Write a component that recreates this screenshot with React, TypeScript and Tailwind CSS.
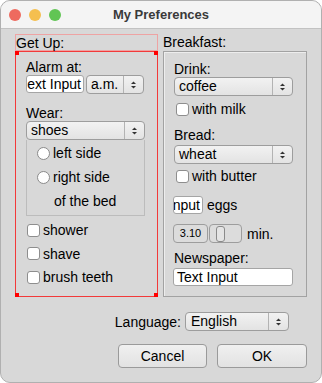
import React from 'react';

// Small up/down arrows used on the right side of popup buttons
function Arrows() {
    return (
        <svg width="7" height="10" viewBox="0 0 7 10" className="block">
            <path d="M1 4 L3.5 1.5 L6 4 Z" fill="#333" />
            <path d="M1 6 L3.5 8.5 L6 6 Z" fill="#333" />
        </svg>
    );
}

function Popup({ value, className = '' }: { value: string; className?: string }) {
    return (
        <div className={`flex h-[19px] items-stretch rounded-[4px] border border-[#9d9d9d] bg-gradient-to-b from-[#f2f2f2] to-[#e3e3e3] ${className}`}>
            <span className="flex-1 pl-[4px] leading-[17px] truncate">{value}</span>
            <span className="flex w-[20px] items-center justify-center border-l border-[#b3b3b3]">
                <Arrows />
            </span>
        </div>
    );
}

// Text field; the scrolled ones only show the tail of "Text Input"
function Field({ value, className = '', tail = false }: { value: string; className?: string; tail?: boolean }) {
    return (
        <div className={`flex h-[18px] overflow-hidden rounded-[3px] border border-[#a5a5a5] bg-white ${tail ? 'justify-end pr-[2px]' : 'pl-[3px]'} ${className}`}>
            <span className="whitespace-nowrap leading-[16px]">{value}</span>
        </div>
    );
}

function Check({ label, className = '' }: { label: string; className?: string }) {
    return (
        <div className={`flex items-center gap-[3px] ${className}`}>
            <span className="h-[13px] w-[13px] rounded-[3px] border border-[#8e8e8e] bg-white" />
            <span className="leading-[16px]">{label}</span>
        </div>
    );
}

function Radio({ label }: { label: string }) {
    return (
        <div className="flex h-[24px] items-center gap-[3px]">
            <span className="h-[13px] w-[13px] rounded-full border border-[#8a8a8a] bg-white" />
            <span className="leading-[16px]">{label}</span>
        </div>
    );
}

export default function App() {
    return (
        <div className="h-[383px] w-[322px] bg-white font-['Liberation_Sans',Arial,sans-serif] text-[14px] text-black">
            <div className="flex h-full flex-col overflow-hidden rounded-[10px] border border-[#b0b0b0] bg-[#d8d8d8]">
                {/* Title bar */}
                <div className="grid h-[28px] grid-cols-[1fr_auto_1fr] items-center border-b border-[#c2c2c2] bg-[#f4f4f4]">
                    <div className="flex gap-[8px] pl-[8px]">
                        <span className="h-[12px] w-[12px] rounded-full bg-[#ee6a5f]" />
                        <span className="h-[12px] w-[12px] rounded-full bg-[#f5bf4f]" />
                        <span className="h-[12px] w-[12px] rounded-full bg-[#61c554]" />
                    </div>
                    <span className="text-[13px] font-bold text-[#3a3a3a]">My Preferences</span>
                    <div />
                </div>

                {/* Columns */}
                <div className="flex gap-[5px] pl-[14px] pt-[5px]">
                    {/* Get Up */}
                    <div className="flex w-[143px] flex-col">
                        <div className="h-[17px] border border-[#eea3a3] leading-[16px]">Get Up:</div>
                        <div className="relative flex h-[246px] flex-col border border-[#f23a3a] pl-[10px] pr-[12px] pt-[7px]">
                            <span className="absolute -left-[1px] -top-[1px] h-[4px] w-[4px] bg-[#f00]" />
                            <span className="absolute -right-[1px] -top-[1px] h-[4px] w-[4px] bg-[#f00]" />
                            <span className="absolute -bottom-[1px] -left-[1px] h-[4px] w-[4px] bg-[#f00]" />
                            <span className="absolute -bottom-[1px] -right-[1px] h-[4px] w-[4px] bg-[#f00]" />

                            <div className="h-[16px] leading-[16px]">Alarm at:</div>
                            <div className="flex gap-[2px]">
                                <Field value="ext Input" tail className="w-[58px]" />
                                <Popup value="a.m." className="h-[18px] w-[58px]" />
                            </div>

                            <div className="mt-[11px] h-[16px] leading-[16px]">Wear:</div>
                            <Popup value="shoes" className="relative" />
                            <div className="flex h-[76px] flex-col border-x border-b border-[#bcbcbc] pl-[10px] pt-px">
                                <Radio label="left side" />
                                <Radio label="right side" />
                                <div className="flex h-[24px] items-center pl-[17px]">of the bed</div>
                            </div>

                            <Check label="shower" className="ml-px mt-[2px] h-[24px]" />
                            <Check label="shave" className="ml-px h-[23px]" />
                            <Check label="brush teeth" className="ml-px h-[24px]" />
                        </div>
                    </div>

                    {/* Breakfast */}
                    <div className="flex w-[144px] flex-col">
                        <div className="h-[17px] leading-[16px]">Breakfast:</div>
                        <div className="flex h-[246px] flex-col border border-[#a2a2a2] pl-[10px] pr-[13px] pt-[9px] shadow-[inset_1px_1px_0_#ededed]">
                            <div className="h-[16px] leading-[16px]">Drink:</div>
                            <Popup value="coffee" />
                            <Check label="with milk" className="ml-[2px] mt-px h-[24px]" />

                            <div className="mt-[6px] h-[16px] leading-[16px]">Bread:</div>
                            <Popup value="wheat" className="mt-[2px]" />
                            <Check label="with butter" className="ml-[2px] h-[24px]" />

                            <div className="mt-[8px] flex items-center gap-[4px]">
                                <Field value="nput" tail className="-ml-px w-[30px]" />
                                <span className="leading-[16px]">eggs</span>
                            </div>

                            <div className="mt-[10px] flex items-center">
                                <div className="-ml-px flex h-[19px] w-[35px] items-center justify-center rounded-[4px] border border-[#9d9d9d] bg-[#dcdcdc] text-[11px]">3.10</div>
                                <div className="ml-px flex h-[19px] w-[33px] items-center rounded-[4px] border border-[#9d9d9d] bg-[#dcdcdc] pl-[6px]">
                                    <span className="h-[16px] w-[9px] rounded-[3px] border border-[#8a8a8a] bg-[#e4e4e4]" />
                                </div>
                                <span className="ml-[5px] leading-[16px]">min.</span>
                            </div>

                            <div className="mt-[7px] h-[16px] leading-[16px]">Newspaper:</div>
                            <Field value="Text Input" className="mt-[2px] -ml-px" />
                        </div>
                    </div>
                </div>

                {/* Language */}
                <div className="mt-[15px] flex items-center justify-end gap-[4px] pr-[32px]">
                    <span className="leading-[16px]">Language:</span>
                    <Popup value="English" className="w-[104px] pl-px" />
                </div>

                {/* Buttons */}
                <div className="mt-[13px] flex justify-end gap-[10px] pr-[14px]">
                    <button className="h-[24px] w-[89px] rounded-[4px] border border-[#9a9a9a] bg-gradient-to-b from-[#f0f0f0] to-[#e2e2e2]">Cancel</button>
                    <button className="h-[24px] w-[90px] rounded-[4px] border border-[#9a9a9a] bg-gradient-to-b from-[#f0f0f0] to-[#e2e2e2]">OK</button>
                </div>
            </div>
        </div>
    );
}
